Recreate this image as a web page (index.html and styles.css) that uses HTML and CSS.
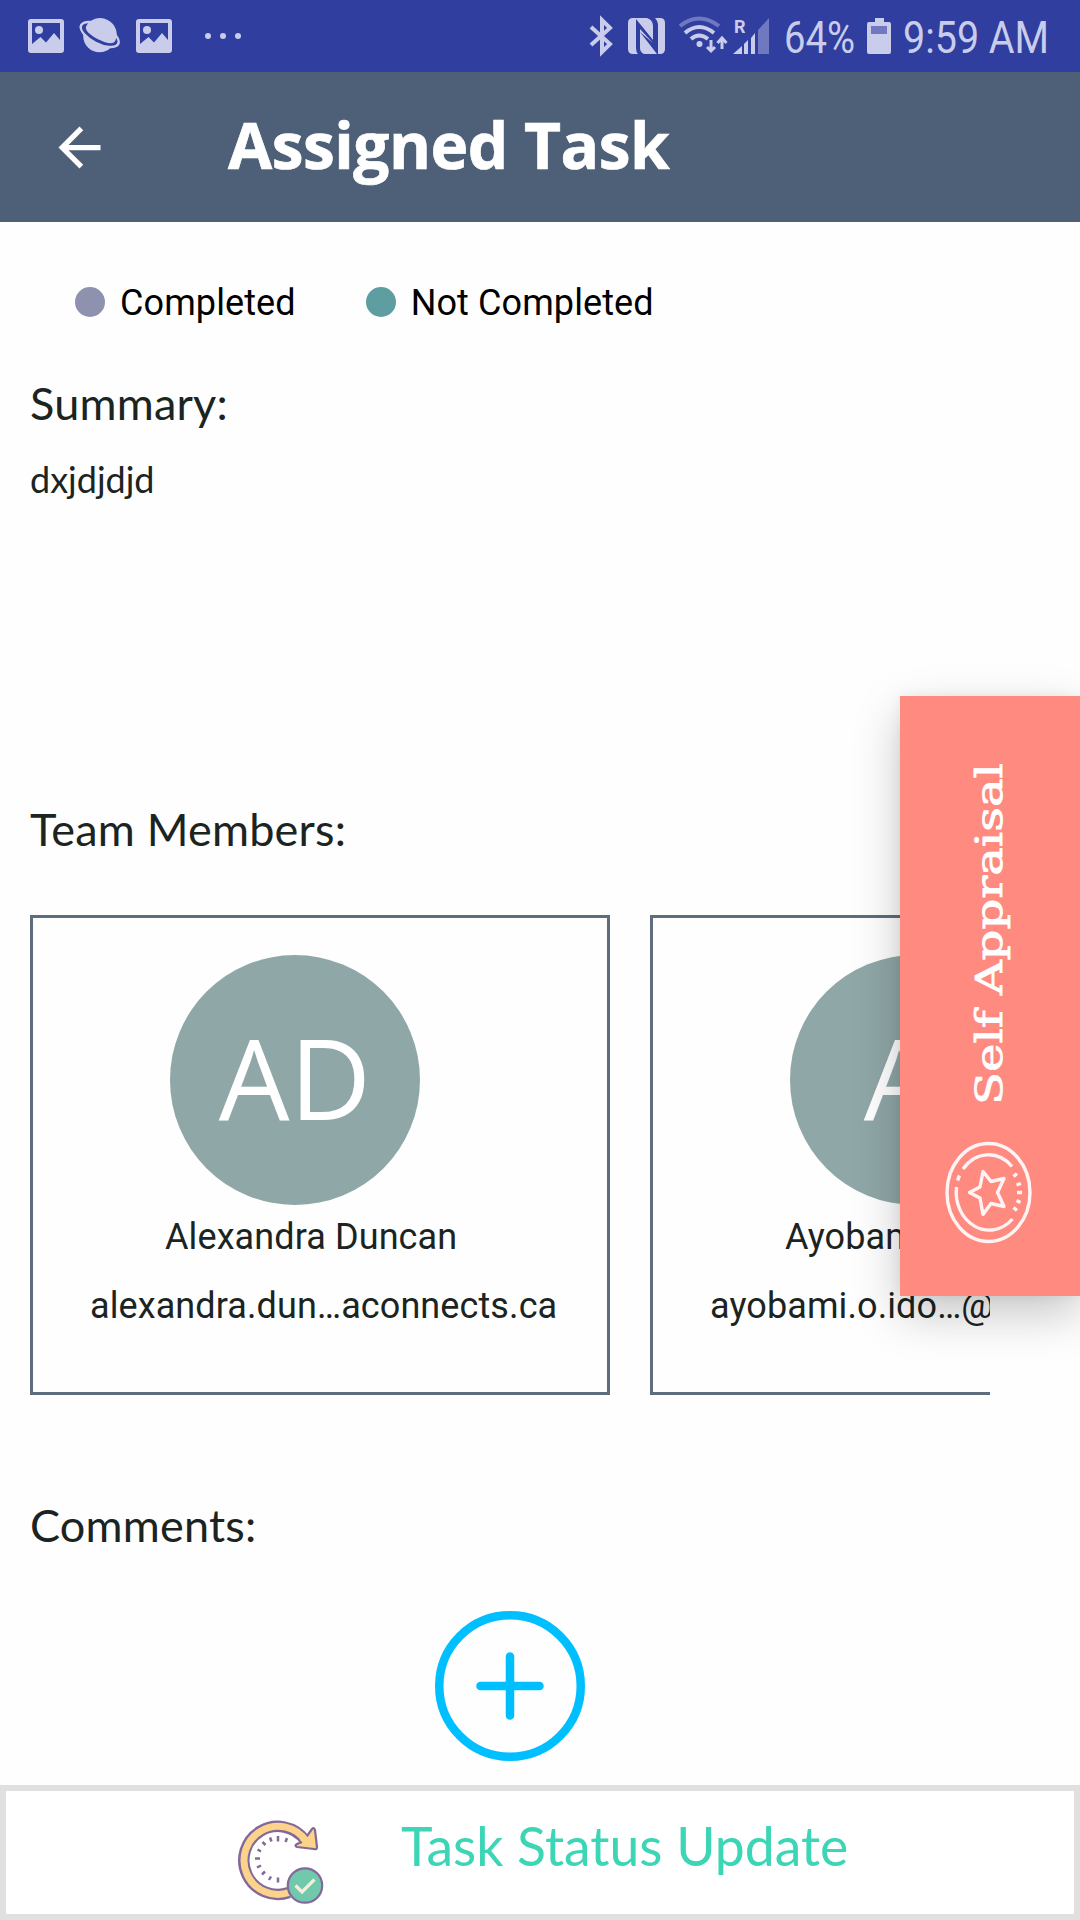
FILE: index.html
```html
<!DOCTYPE html>
<html lang="en">
<head>
<meta charset="utf-8">
<title>Assigned Task</title>
<link rel="stylesheet" href="styles.css">
</head>
<body>
<div class="screen">
  <div class="status-bar">
    <div class="status-left">
      <svg class="icon-image" width="36" height="34" viewBox="0 0 36 34"><path fill-rule="evenodd" d="M3 0H33Q36 0 36 3V31Q36 34 33 34H3Q0 34 0 31V3Q0 0 3 0ZM4 4V25L12.500 18L18 23.500L26 14L32 21V4Z"/><circle cx="11" cy="11" r="4"/></svg>
      <svg class="icon-planet" width="42" height="34" viewBox="0 0 42 34"><circle cx="20.500" cy="17" r="16.300"/><g transform="translate(20.700 15.500) rotate(27)"><ellipse rx="22" ry="10.500"/><ellipse class="planet-gap" rx="19.500" ry="8"/><path d="M-15.800 -1A16.300 15.500 0 0 1 16.800 -1Q16 4.800 0 5Q-15 4.500 -15.800 -1Z"/></g></svg>
      <svg class="icon-image" width="36" height="34" viewBox="0 0 36 34"><path fill-rule="evenodd" d="M3 0H33Q36 0 36 3V31Q36 34 33 34H3Q0 34 0 31V3Q0 0 3 0ZM4 4V25L12.500 18L18 23.500L26 14L32 21V4Z"/><circle cx="11" cy="11" r="4"/></svg>
      <svg class="icon-dots" width="36" height="6" viewBox="0 0 36 6"><circle cx="3" cy="3" r="3"/><circle cx="18" cy="3" r="3"/><circle cx="33" cy="3" r="3"/></svg>
    </div>
    <div class="status-right">
      <svg width="24" height="38" viewBox="0 0 24 38"><path class="line" d="M2 10L21 27L13 35V3L21 11L2 28"/></svg>
      <svg class="icon-nfc" width="37" height="36" viewBox="0 0 37 36"><path d="M5 0H19Q25 2 25 8V22L8 1V30Q8 34 10 36H5Q0 36 0 31V5Q0 0 5 0ZM12 14V30Q12 34 16 36H29L12 14ZM12 11L25 25L12 14ZM27 0H32Q37 0 37 5V31Q37 36 32 36H30V8Q30 3 27 0Z"/></svg>
      <svg class="icon-wifi" width="48" height="38" viewBox="0 0 48 38"><path class="line dim" d="M1 9Q20 -6 40 9"/><path class="line" d="M6 16Q20 4 35 16M12 22Q20 15 29 22"/><circle cx="20.500" cy="27" r="3"/><path class="arrows" d="M32 23V34M28 30L32 34L36 30M43 32V21M38.500 26L43 21L47.500 26"/></svg>
      <svg class="icon-signal" width="36" height="37" viewBox="0 0 36 37"><text class="roaming" x="1" y="15">R</text><path d="M0 36L9 28V36ZM11 26L15 22V36H11ZM18 20L22 15V36H18Z"/><path class="dim-fill" d="M25 12L36 0V36H25Z"/></svg>
      <svg class="battery-text" width="70" height="50" viewBox="0 0 70 50"><text x="-1" y="42" textLength="71" lengthAdjust="spacingAndGlyphs">64%</text></svg>
      <svg class="icon-battery" width="24" height="36" viewBox="0 0 24 36"><path d="M8 0H17V4H22Q24 4 24 6V34Q24 36 22 36H2Q0 36 0 34V6Q0 4 2 4H8Z"/><path class="battery-empty" d="M4 8H20V16H4Z"/></svg>
      <svg class="clock" width="144" height="50" viewBox="0 0 144 50"><text x="-2" y="42" textLength="146" lengthAdjust="spacingAndGlyphs">9:59 AM</text></svg>
    </div>
  </div>

  <header class="app-bar">
    <svg class="back" width="63" height="63" viewBox="0 0 24 24"><path d="M20 11H7.830l5.590-5.590L12 4l-8 8 8 8 1.410-1.410L7.830 13H20v-2z"/></svg>
    <h1 class="title">Assigned Task</h1>
  </header>

  <main class="content">
    <div class="legend">
      <div class="legend-item"><span class="dot dot-done"></span>Completed</div>
      <div class="legend-item"><span class="dot dot-open"></span>Not Completed</div>
    </div>

    <h2 class="heading">Summary:</h2>
    <p class="summary">dxjdjdjd</p>

    <h2 class="heading">Team Members:</h2>
    <div class="members">
      <div class="card">
        <div class="avatar">AD</div>
        <div class="name">Alexandra Duncan</div>
        <div class="email">alexandra.dun…aconnects.ca</div>
      </div>
      <div class="card">
        <div class="avatar">AI</div>
        <div class="name">Ayobami Idowu</div>
        <div class="email">ayobami.o.ido…@connects.ca</div>
      </div>
    </div>

    <h2 class="heading">Comments:</h2>
    <svg class="add" width="150" height="150" viewBox="0 0 150 150"><circle cx="75" cy="75" r="70.750"/><path d="M45.500 75H104.500M75 45.500V104.500"/></svg>
  </main>

  <footer class="footer">
    <svg class="footer-icon" width="86" height="86" viewBox="0 0 86 86">
      <path class="ring-edge" d="M50 73.500A34 34 0 1 1 66 21"/>
      <path class="head" d="M60 20L68 17L73 10Q75 8 76 11L78 28Q78 31 75 30L58 28Q55 27 58 25L63 23"/>
      <path class="ring-fill" d="M50 73.500A34 34 0 1 1 67 22"/>
      <path class="ticks" d="M39 17V22.500M48 19L46.500 23M31 18.500L32.500 22.500M23.500 23L26.500 26M18.500 30.500L22 32.500M16 39.500H21M18 48.500L22 46.500M23 55.500L26 52.500M30 61L32 57.500M39 63.500V58.500"/>
      <circle class="badge" cx="66" cy="66.500" r="17.200"/>
      <path class="check" d="M56.500 66.500L63 73L75.500 60.500"/>
    </svg>
    <span class="footer-label">Task Status Update</span>
  </footer>

  <aside class="side-tab">
    <svg class="side-art" width="180" height="600" viewBox="0 0 180 600">
      <text class="side-label" transform="translate(101.500 409) rotate(-90)" textLength="342" lengthAdjust="spacingAndGlyphs">Self Appraisal</text>
      <g class="medal">
        <ellipse cx="88.500" cy="496.500" rx="41.500" ry="49"/>
        <path d="M63 473A33 39 0 0 1 112 470.500M112.500 523A33 38 0 0 1 56.500 491M57.500 484.500L59.500 479.500"/>
        <path d="M113.500 480.500L117 477.500M116.500 489L121 487.500M117 496.500H122M116.500 504.500L120.500 506.500M113.500 511.500L117 514.500"/>
        <path class="star" d="M69.500 496.500L80 491L83 475.500L91 485.500L104 482.500L97.500 496.500L104 510.500L91 507.500L83 518.500L80 502Z"/>
      </g>
    </svg>
  </aside>
</div>
</body>
</html>
```
FILE: styles.css
```css
* { box-sizing: border-box; }
body { margin: 0; background: #fefefe; }
svg { display: block; flex: none; overflow: visible; }
h1, h2, p { margin: 0; }

.screen {
  position: relative;
  display: flex;
  flex-direction: column;
  width: 1080px;
  height: 1920px;
  overflow: hidden;
  background: #fefefe;
  color: #1b2421;
  font-family: Roboto, sans-serif;
  font-size: 36px;
}

/* Status bar */
.status-bar {
  display: flex;
  flex: none;
  justify-content: space-between;
  height: 72px;
  padding: 0 31px 0 28px;
  background: #303e9f;
  fill: #c9cdeb;
}
.status-left, .status-right { display: flex; align-items: center; }
.icon-planet { margin: 0 15px; }
.planet-gap { fill: #303e9f; }
.icon-dots { margin-left: 33px; }
.line { fill: none; stroke: #c9cdeb; stroke-width: 4; }
.dim { stroke: #7079c0; }
.dim-fill { fill: #7079c0; }
.arrows { fill: none; stroke: #c9cdeb; stroke-width: 3; }
.icon-nfc { margin-left: 15px; }
.icon-wifi { margin-left: 14px; }
.icon-signal { margin-left: 6px; }
.roaming { font: 700 18px Roboto, sans-serif; }
.battery-text { margin-left: 16px; }
.battery-text text, .clock text { font: 400 45px Roboto, sans-serif; }
.icon-battery { margin-left: 12px; }
.battery-empty { fill: #7079c0; }
.clock { margin-left: 14px; }

/* App bar */
.app-bar {
  display: flex;
  flex: none;
  align-items: center;
  height: 150px;
  padding-left: 48px;
  background: #4e5f78;
}
.back { fill: #fff; }
.title {
  margin: -5px 0 0 117px;
  color: #fff;
  font: 700 64px/80px "Open Sans", sans-serif;
  letter-spacing: -0.5px;
  -webkit-text-stroke: 0.7px #fff;
}

/* Content */
.content { flex: none; height: 1563px; padding: 57px 90px 0 30px; }
.legend { display: flex; gap: 70px; padding-left: 45px; color: #000; line-height: 48px; letter-spacing: 0.1px; }
.legend-item { display: flex; align-items: center; gap: 15px; }
.dot { width: 30px; height: 30px; margin-bottom: 3px; border-radius: 50%; }
.dot-done { background: #8e92ae; }
.dot-open { background: #5f9ea0; }
.heading { margin-top: 50px; font: 400 45px/54px Lato, sans-serif; letter-spacing: 0.2px; }
.legend + .heading { margin-top: 49px; }
.summary { height: 345px; margin-top: 27px; font: 400 36px/44px Lato, sans-serif; }
.summary + .heading { margin-top: 0; }
.members { display: flex; gap: 40px; height: 480px; margin-top: 59px; overflow: hidden; }
.members + .heading { margin-top: 103px; }
.card { flex: none; width: 580px; height: 480px; padding-top: 37px; border: 3px solid #5d6d7e; white-space: nowrap; letter-spacing: 0.1px; }
.avatar {
  width: 250px;
  height: 250px;
  margin-left: 137px;
  border-radius: 50%;
  background: #90a7a7;
  color: #fff;
  font: 400 112px/244px "Open Sans", sans-serif;
  text-align: center;
}
.name { margin: 8px 0 0 132px; line-height: 48px; }
.email { margin: 21px 0 0 57px; line-height: 48px; }
.add { margin: 59px 0 0 405px; fill: none; stroke: #00bfff; stroke-width: 8.5; stroke-linecap: round; }

/* Footer */
.footer { display: flex; flex: none; height: 135px; padding: 28px 0 0 233px; border: 6px solid #e0e0e0; background: #fff; }
.footer-label { margin: -6px 0 0 76px; color: #3cd5b6; font: 400 53.5px/64px Lato, sans-serif; }
.ring-edge { fill: none; stroke: #84689a; stroke-width: 11.5; }
.ring-fill { fill: none; stroke: #fbd38b; stroke-width: 7; }
.head { fill: #fbd38b; stroke: #84689a; stroke-width: 2.2; }
.ticks { fill: none; stroke: #84689a; stroke-width: 2.5; }
.badge { fill: #70c9ad; stroke: #84689a; stroke-width: 2.2; }
.check { fill: none; stroke: #f4edd8; stroke-width: 3.2; }

/* Floating tab over the right edge */
.side-tab {
  position: absolute;
  top: 696px;
  right: 0;
  width: 180px;
  height: 600px;
  background: #ff8a80;
  box-shadow: 0 18px 44px rgba(0, 0, 0, 0.22), 0 0 12px rgba(0, 0, 0, 0.06);
}
.side-label { fill: #fff; stroke: #fff; stroke-width: 0.8; font: 400 37.5px "DejaVu Serif", serif; }
.medal { fill: none; stroke: #fff; stroke-width: 3.4; stroke-opacity: 0.9; }
.star { stroke-linejoin: round; }
```
